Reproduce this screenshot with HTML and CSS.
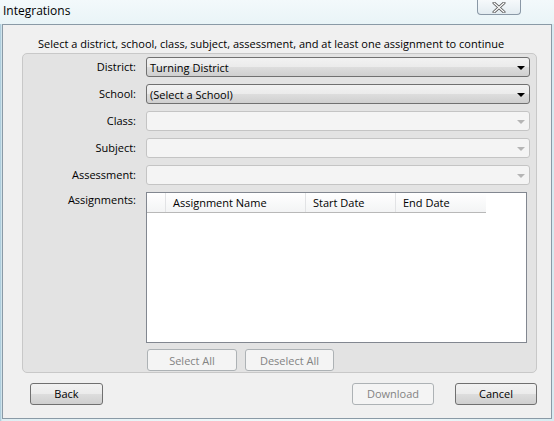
FILE: index.html
```html
<!DOCTYPE html>
<html>
<head>
<meta charset="utf-8">
<link rel="stylesheet" href="styles.css">
</head>
<body>
<div class="window">
  <div class="titlebar">
    <span class="title">Integrations</span>
    <div class="close"><svg width="14" height="11" viewBox="0 0 14 11"><path d="M2 1 L12 10 M12 1 L2 10" stroke="#555" stroke-width="3" stroke-linecap="round"/><path d="M2 1 L12 10 M12 1 L2 10" stroke="#fff" stroke-width="1.2" stroke-linecap="round"/></svg></div>
  </div>
  <div class="client">
    <div class="instruction">Select a district, school, class, subject, assessment, and at least one assignment to continue</div>
    <div class="group">
      <div class="row">
        <label class="lbl">District:</label>
        <div class="combo active"><span>Turning District</span><i class="arrow"></i></div>
      </div>
      <div class="row">
        <label class="lbl">School:</label>
        <div class="combo active"><span>(Select a School)</span><i class="arrow"></i></div>
      </div>
      <div class="row">
        <label class="lbl">Class:</label>
        <div class="combo disabled"><span></span><i class="arrow"></i></div>
      </div>
      <div class="row">
        <label class="lbl">Subject:</label>
        <div class="combo disabled"><span></span><i class="arrow"></i></div>
      </div>
      <div class="row">
        <label class="lbl">Assessment:</label>
        <div class="combo disabled"><span></span><i class="arrow"></i></div>
      </div>
      <div class="row list-row">
        <label class="lbl">Assignments:</label>
        <div class="list">
          <div class="list-head">
            <div class="col c0"></div>
            <div class="col c1">Assignment Name</div>
            <div class="col c2">Start Date</div>
            <div class="col c3">End Date</div>
          </div>
        </div>
      </div>
      <div class="row btn-row">
        <div class="btn dis sa">Select All</div>
        <div class="btn dis da">Deselect All</div>
      </div>
    </div>
    <div class="footer">
      <div class="btn back">Back</div>
      <div class="spacer"></div>
      <div class="btn dis dl">Download</div>
      <div class="btn cancel">Cancel</div>
    </div>
  </div>
</div>
</body>
</html>
```
FILE: styles.css
```css
* { box-sizing: border-box; }
html, body { margin: 0; padding: 0; }
body {
  width: 554px; height: 421px; overflow: hidden;
  font-family: "Open Sans", "DejaVu Sans", sans-serif;
  font-size: 11px;
  color: #000;
  background: linear-gradient(90deg, #9fc3d6 0px, #dfeef3 2px, #eef7f9 40%, #f4fafb 70%, #d7ebf1 100%);
}
.window { width: 554px; height: 421px; display: flex; flex-direction: column; }
.titlebar {
  height: 24px; flex: none; position: relative;
  display: flex; align-items: center; padding-left: 3px;
  background: linear-gradient(180deg, #f3f9fb, #e9f4f7);
}
.title { font-size: 12px; color: #000; margin-top: -3px; }
.close {
  position: absolute; right: 33px; top: 0;
  width: 44px; height: 15px;
  border: 1px solid #8a98a6; border-top: none;
  border-radius: 0 0 4px 4px;
  background: linear-gradient(180deg, #f6f9fb, #e3ecf1);
  display: flex; align-items: center; justify-content: center;
}
.client {
  margin: 0 2px 2px 2px;
  flex: 1;
  background: #f0f0f0;
  border: 1px solid #8a9aa6;
  display: flex; flex-direction: column;
  padding: 0 14px 0 19px;
}
.instruction {
  font-size: 11px;
  padding-top: 12px; height: 28px; line-height: 14px;
  padding-left: 16px;
  white-space: nowrap;
}
.group {
  background: #e3e3e3;
  border: 1px solid #c8c8c8;
  border-radius: 5px;
  height: 320px;
  padding: 3px 2px 0 0;
  display: flex; flex-direction: column;
}
.row { display: flex; align-items: flex-start; height: 27px; flex: none; }
.row .lbl { width: 113px; text-align: right; flex: none; line-height: 20px; }
.combo {
  margin-left: 10px;
  width: 384px; height: 20px;
  border-radius: 3px;
  display: flex; align-items: center; justify-content: space-between;
  padding: 0 4px 0 3px;
}
.combo.active {
  border: 1px solid #707070;
  background: linear-gradient(180deg, #f2f2f2 0%, #ebebeb 50%, #dddddd 51%, #cfcfcf 100%);
}
.combo.disabled {
  border: 1px solid #c4c4c4;
  background: #f4f4f4;
}
.arrow {
  width: 0; height: 0;
  border-left: 4px solid transparent; border-right: 4px solid transparent;
  border-top: 4px solid #000;
  margin-top: 1px;
}
.combo.disabled .arrow { border-top-color: #b5b5b5; }
.list-row { height: 157px; }
.list-row .lbl { line-height: 16px; }
.list {
  margin-left: 10px;
  width: 381px; height: 151px;
  border: 1px solid #828790;
  background: #fff;
}
.list-head {
  display: flex; height: 20px; width: 339px;
  border-bottom: 1px solid #b8b8b8;
  background: linear-gradient(180deg, #ffffff, #f3f4f5);
}
.col {
  border-right: 1px solid #e2e3e5;
  line-height: 19px; padding-left: 7px;
  flex: none;
}
.c0 { width: 19px; }
.c1 { width: 140px; }
.c2 { width: 90px; }
.c3 { width: 90px; border-right: none; }
.btn-row { height: 30px; padding-left: 124px; gap: 8px; }
.btn {
  height: 22px; border-radius: 3px;
  display: flex; align-items: center; justify-content: center;
  border: 1px solid #707070;
  background: linear-gradient(180deg, #f2f2f2 0%, #ebebeb 50%, #dddddd 51%, #cfcfcf 100%);
}
.btn.dis { border-color: #adb2b5; background: #f4f4f4; color: #838383; }
.sa { width: 90px; }
.da { width: 89px; }
.footer { display: flex; align-items: center; height: 40px; padding-left: 8px; padding-top: 1px; }
.spacer { flex: 1; }
.back { width: 73px; }
.dl { width: 82px; margin-right: 21px; }
.cancel { width: 82px; }
```
